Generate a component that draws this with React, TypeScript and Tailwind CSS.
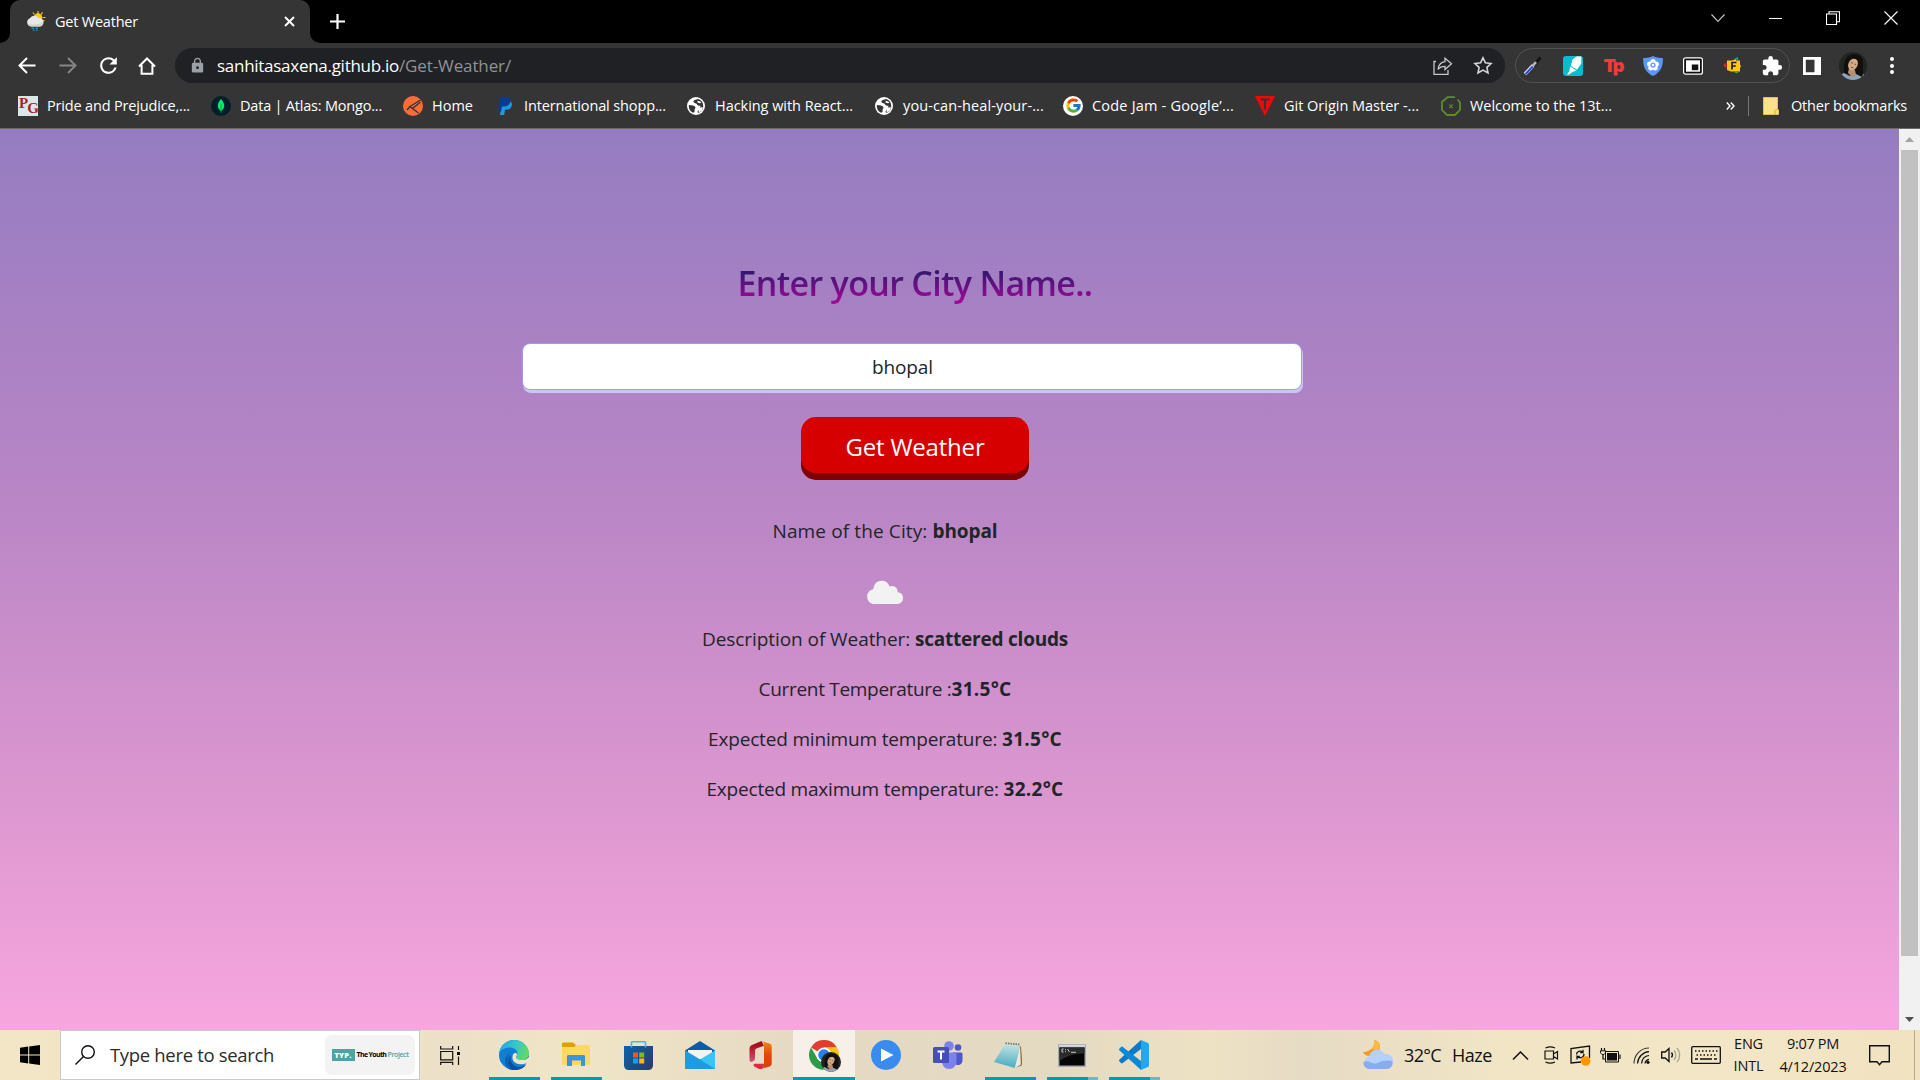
import { useLayoutEffect, useRef, type ReactNode } from "react";
import { FcGoogle } from "react-icons/fc";
import { MdExtension, MdRefresh, MdLock } from "react-icons/md";

/* One line of text, tracked so that it fills the width of its box. */
function Fit({ className, children }: { className: string; children: string }) {
  const box = useRef<HTMLSpanElement>(null);
  const line = useRef<HTMLSpanElement>(null);
  useLayoutEffect(() => {
    if (!box.current || !line.current) return;
    line.current.style.letterSpacing = "0px";
    const free = box.current.getBoundingClientRect().width - line.current.getBoundingClientRect().width;
    line.current.style.letterSpacing = `${free / children.length}px`;
  }, [children]);
  return (
    <span ref={box} className={`inline-block shrink-0 whitespace-pre ${className}`}>
      <span ref={line}>{children}</span>
    </span>
  );
}

function Svg({ className, box, children }: { className: string; box: string; children: ReactNode }) {
  return (
    <svg className={`shrink-0 ${className}`} viewBox={box} fill="none">
      {children}
    </svg>
  );
}

/* ---------- tab strip ---------- */

function WeatherFavicon() {
  return (
    <Svg className="h-5 w-5" box="0 0 20 20">
      <g stroke="#f5c400" strokeWidth="1.2">
        <path d="M12 0v3M16.5 1.2l-1.4 2.4M19.5 6.5h-3M7 1.5l1.4 2M18.5 10l-2.3-1" />
      </g>
      <circle cx="12" cy="6.5" r="4.2" fill="#f6cb15" />
      <path d="M5 15.5a4.3 4.3 0 0 1-1-8.3A5 5 0 0 1 12.500 7a4.200 4.200 0 0 1 1.500 8.500z" fill="#e8e8ea" />
      <path d="M1.500 12.500c3 1.500 9 1.500 15.500-1-.3 2.500-1.500 4-3 4H5c-1.500 0-3-1-3.500-3z" fill="#d2d2d6" />
      <path d="M5.500 17.200H8M9.500 17.200H12M7 19.300h1.500M10 19.300h1.500" stroke="#1d8ac4" strokeWidth="1.500" />
    </Svg>
  );
}

function TabStrip() {
  return (
    <div className="flex h-[43px] items-start bg-black">
      <div className="h-[43px] w-[10px] bg-[#353535]">
        <div className="h-full w-full rounded-br-[10px] bg-black" />
      </div>
      <div className="flex h-[43px] w-[300px] items-center rounded-t-[10px] bg-[#353535] pr-[15px] pb-px pl-[16px]">
        <WeatherFavicon />
        <Fit className="ml-[9px] w-[83px] text-[14.5px] leading-[41px] text-white">Get Weather</Fit>
        <Svg className="ml-auto h-[11px] w-[11px]" box="0 0 11 11">
          <path d="M1 1l9 9M10 1l-9 9" stroke="#fff" strokeWidth="1.900" />
        </Svg>
      </div>
      <div className="h-[43px] w-[10px] bg-[#353535]">
        <div className="h-full w-full rounded-bl-[10px] bg-black" />
      </div>
      <Svg className="mt-[14px] ml-[10px] h-[15px] w-[15px]" box="0 0 15 15">
        <path d="M7.500 0v15M0 7.500h15" stroke="#fff" strokeWidth="2.200" />
      </Svg>
      <div className="mt-[11px] mr-[22px] ml-auto flex h-[14px] items-center">
        <Svg className="h-[8px] w-[14px]" box="0 0 14 8">
          <path d="M.5.5L7 7.300 13.500.5" stroke="#ccc" strokeWidth="1.100" />
        </Svg>
        <div className="ml-[44px] h-px w-[13px] bg-white" />
        <Svg className="ml-[44px] h-[14px] w-[14px]" box="0 0 14 14">
          <path d="M.5 3h10v10.500H.5zM3 3V.8h10.500v10H10.700" stroke="#fff" strokeWidth="1.100" />
        </Svg>
        <Svg className="ml-[44px] h-[14px] w-[14px]" box="0 0 14 14">
          <path d="M.5.5l13 13M13.500.5l-13 13" stroke="#fff" strokeWidth="1.100" />
        </Svg>
      </div>
    </div>
  );
}

/* ---------- toolbar ---------- */

function Avatar({ className }: { className: string }) {
  return (
    <svg className={`shrink-0 overflow-hidden rounded-full ${className}`} viewBox="0 0 28 28">
      <rect width="28" height="28" fill="#20261f" />
      <path d="M3 28V22l6-3h10l7 4v5z" fill="#8ea4b8" />
      <path d="M5 21C4 10 7 2 15 2c8 0 10 6 9 12-.5 4 1 8-1 11l-8-4-4 3z" fill="#120f0f" />
      <path d="M10 16l6 2 1 5-4 2-4-4z" fill="#b98e6f" />
      <ellipse cx="14" cy="12.300" rx="4.600" ry="6.200" transform="rotate(24 14 12.300)" fill="#d3aa88" />
      <path d="M10 8.500c2-5 7-5 9-.5-3-2-6-1.500-9 .5z" fill="#120f0f" />
      <path d="M12 10.500l1.800.6M15.500 12l1.500.6M12 15l2.200.9" stroke="#5b3328" strokeWidth=".8" />
    </svg>
  );
}

function Extensions() {
  return (
    <div className="ml-[10px] flex h-[35px] w-[275px] items-center rounded-full border border-[#515151] pl-[7px]">
      <Svg className="h-5 w-5" box="0 0 20 20">
        <path d="M11 9l6.500-7.500" stroke="#151515" strokeWidth="3.200" />
        <path d="M10 9.500L13 6" stroke="#b9bcc2" strokeWidth="2.600" />
        <path d="M2 18l8-8.500" stroke="#d5dcf5" strokeWidth="3.600" />
        <path d="M2.600 18l7.200-7.700" stroke="#2849c8" strokeWidth="1.900" />
      </Svg>
      <Svg className="ml-5 h-5 w-5" box="0 0 20 20">
        <rect width="20" height="20" rx="3" fill="#07bcd0" />
        <path d="M9.500 3.500L13.500.5h4.800v7L14 13.800l-6.200-4z" fill="#fff" />
        <path d="M7.300 10.600l6 4-3.800 1.400-3.500 2.500H4l2.200-3.300z" fill="#fff" />
      </Svg>
      <div className="ml-5 flex h-5 w-5 items-center justify-center">
        <Fit className="w-[19px] font-['Inter'] text-[18px] leading-5 font-black text-[#f13c3a]">Tp</Fit>
      </div>
      <Svg className="ml-5 h-5 w-5" box="0 0 20 20">
        <path d="M10 0c3 1.500 6 2 9.800 2 .5 8-2 14-9.800 18C2.200 16-.3 10 .2 2 4 2 7 1.500 10 0z" fill="#5b97f6" />
        <g fill="#fff">
          <circle cx="10" cy="5.500" r="2.600" />
          <circle cx="13.300" cy="8" r="2.600" />
          <circle cx="12.100" cy="11.800" r="2.600" />
          <circle cx="7.900" cy="11.800" r="2.600" />
          <circle cx="6.700" cy="8" r="2.600" />
        </g>
        <circle cx="10" cy="9" r="2.600" fill="#5b97f6" />
        <circle cx="10" cy="9" r="1.300" fill="#fff" />
      </Svg>
      <Svg className="ml-5 h-5 w-5" box="0 0 20 20">
        <rect x=".6" y="1.800" width="18.800" height="16.400" rx="2" fill="#111" stroke="#fff" strokeWidth="1.200" />
        <rect x="3" y="4.300" width="14" height="11.400" fill="#fff" />
        <rect x="8.800" y="8.500" width="6.500" height="5.700" fill="#111" />
      </Svg>
      <Svg className="ml-5 h-5 w-5" box="0 0 20 20">
        <path d="M4 4.500h5l4-1.500v1.500h4v4l1 1.500-1 2v3.500H8l-4-1.500z" fill="#fbc916" />
        <path d="M0 9.500L3.500 6.500v6z" fill="#e0212c" />
        <path d="M11.500 3l3-2 1 3z" fill="#18a7b5" />
        <path d="M11 16h5l-2.500 1.500z" fill="#42a047" />
        <path d="M9 13.500V6.500h4.500M9 10h3.800" stroke="#222" strokeWidth="1.700" />
      </Svg>
      <MdExtension className="ml-[18px] h-[22px] w-[22px] text-white" />
    </div>
  );
}

function Toolbar() {
  return (
    <div className="flex h-[45px] items-center bg-[#353535] pl-[18px]">
      <Svg className="h-[17px] w-[18px]" box="0 0 18 17">
        <path d="M17.500 8.500H1.500M9 1L1.500 8.500 9 16" stroke="#fff" strokeWidth="2" />
      </Svg>
      <Svg className="ml-[23px] h-[17px] w-[18px]" box="0 0 18 17">
        <path d="M.5 8.500h16M9 1l7.500 7.500L9 16" stroke="#868686" strokeWidth="1.900" />
      </Svg>
      <MdRefresh className="ml-[19px] h-[25px] w-[25px] text-white" />
      <Svg className="ml-[17px] h-[18px] w-[18px]" box="0 0 18 18">
        <path d="M1 9.500L9 1.500l8 8M3.600 8v8.700h10.800V8" stroke="#fff" strokeWidth="2" />
      </Svg>
      <div className="ml-[19px] flex h-[35px] w-[1330px] items-center rounded-full bg-[#202124] pr-[12px] pl-[14px]">
        <MdLock className="h-[17px] w-[17px] text-[#9aa0a6]" />
        <Fit className="ml-[11px] w-[182px] text-[17px] leading-[35px] text-white">sanhitasaxena.github.io</Fit>
        <Fit className="w-[112px] text-[17px] leading-[35px] text-[#8f9397]">/Get-Weather/</Fit>
        <Svg className="ml-auto h-[18px] w-[20px]" box="0 0 20 18">
          <path d="M3 4.500H1v12.800h14V13" stroke="#c4c7c9" strokeWidth="1.300" />
          <path d="M12 1.200l6.500 5.600L12 12.500V9.300C8.500 9.300 6.500 10.200 5 12.500c.5-4.300 3-7.300 7-7.800z" stroke="#c4c7c9" strokeWidth="1.300" />
        </Svg>
        <Svg className="ml-[20px] h-[19px] w-[20px]" box="0 0 20 19">
          <path d="M10 1.800l2.400 5 5.600.7-4.100 3.800 1.100 5.600-5-2.800-5 2.800 1.100-5.600L2 7.500l5.600-.7z" stroke="#d4d6d8" strokeWidth="1.600" />
        </Svg>
      </div>
      <Extensions />
      <Svg className="ml-[13px] h-[18px] w-[18px]" box="0 0 18 18">
        <path d="M0 0h18v18H0zM2.800 2.800v12.400h8.700V2.800z" fill="#fff" fillRule="evenodd" />
      </Svg>
      <Avatar className="ml-[18px] h-7 w-7" />
      <div className="ml-[23px] flex flex-col gap-[2.500px]">
        <div className="h-1 w-1 rounded-full bg-white" />
        <div className="h-1 w-1 rounded-full bg-white" />
        <div className="h-1 w-1 rounded-full bg-white" />
      </div>
    </div>
  );
}

/* ---------- bookmarks ---------- */

function Globe() {
  return (
    <Svg className="h-5 w-5" box="0 0 20 20">
      <circle cx="10" cy="10" r="9" fill="#fff" />
      <path d="M2.800 9c2 .3 4.500.2 6.200 1.500.8 1 .5 1.800-.3 2.500l-.2 3-1.500.8C4 15.500 2.500 12.500 2.800 9z" fill="#353535" />
      <path d="M12 3c-2 .5-4.800 1-4.500 3 .3 1.500 3 .8 3.500 2.200.4 1.300 2 1.600 3.500 1.500l-1 3.300-2 2.500.5 1.500c3.500-.8 5.500-4 5.200-7.500C17 6 15 3.800 12 3z" fill="#353535" />
      <path d="M11.500 4.500c1.500.8 3 .2 3.800 2.300-1.300 1-2.300.1-3.600 0z" fill="#fff" />
      <path d="M13 12c1.500-.8 3-1 4-.5l-1.500 3.500-3 1.500z" fill="#fff" />
    </Svg>
  );
}

function Bookmark({ slot, width, icon, label }: { slot: string; width: string; icon: ReactNode; label: string }) {
  return (
    <div className={`flex shrink-0 items-center ${slot}`}>
      <div className="flex h-5 w-5 items-center justify-center">{icon}</div>
      <Fit className={`ml-[9px] text-[14.500px] leading-[20px] text-white ${width}`}>{label}</Fit>
    </div>
  );
}

function Bookmarks() {
  return (
    <div className="flex h-[41px] items-center border-b border-[#6a6a6a] bg-[#353535] pr-[13px] pb-[5px] pl-[18px]">
      <Bookmark
        slot="w-[193px]"
        width="w-[143px]"
        label="Pride and Prejudice,..."
        icon={
          <div className="flex h-5 w-5 bg-[#dbe6ea] pl-px font-['Liberation_Serif'] text-[15px] font-bold text-[#a5261c]">
            <span className="leading-[15px]">P</span>
            <span className="-ml-px leading-[24px]">G</span>
          </div>
        }
      />
      <Bookmark
        slot="w-[192px]"
        width="w-[142px]"
        label="Data | Atlas: Mongo..."
        icon={
          <Svg className="h-5 w-5" box="0 0 20 20">
            <circle cx="10" cy="10" r="10" fill="#021e2b" />
            <path d="M10 3c4.500 5 4 9.500 0 12-4-2.500-4.500-7 0-12z" fill="#00ed64" />
            <path d="M10 8v9" stroke="#05a852" strokeWidth=".8" />
          </Svg>
        }
      />
      <Bookmark
        slot="w-[92px]"
        width="w-[41px]"
        label="Home"
        icon={
          <Svg className="h-5 w-5" box="0 0 20 20">
            <circle cx="10" cy="10" r="10" fill="#ff6c37" />
            <path d="M17.500 4L7 10.500l2.500 2M17.500 6L9.500 12.500l6 4.500M7 10.500L4 14" stroke="#353535" strokeWidth="1.400" />
          </Svg>
        }
      />
      <Bookmark
        slot="w-[191px]"
        width="w-[142px]"
        label="International shopp..."
        icon={
          <Svg className="h-[18px] w-[16px]" box="0 0 16 18">
            <path d="M5 4h7c3 .5 3.500 3 2.500 5.500-.8 2.300-3 3.300-5.500 3.300H8L7.200 18H3z" fill="#1a9be0" />
            <path d="M3.500 0h6C13 0 14 2.500 13 5.500c-.8 2.700-3 4-6 4H5L4.200 14.500H.8z" fill="#0b3b8f" />
          </Svg>
        }
      />
      <Bookmark slot="w-[188px]" width="w-[138px]" label="Hacking with React..." icon={<Globe />} />
      <Bookmark slot="w-[189px]" width="w-[141px]" label="you-can-heal-your-..." icon={<Globe />} />
      <Bookmark
        slot="w-[192px]"
        width="w-[142px]"
        label="Code Jam - Google’..."
        icon={
          <div className="flex h-5 w-5 items-center justify-center rounded-full bg-white">
            <FcGoogle className="h-[17px] w-[17px]" />
          </div>
        }
      />
      <Bookmark
        slot="w-[186px]"
        width="w-[135px]"
        label="Git Origin Master -..."
        icon={
          <Svg className="h-5 w-5" box="0 0 20 20">
            <path d="M0 0h20l-10 20z" fill="#fa0505" />
            <path d="M5.500 3.500h9M10 3.500v10" stroke="#353535" strokeWidth="2.200" />
          </Svg>
        }
      />
      <Bookmark
        slot="w-[190px]"
        width="w-[142px]"
        label="Welcome to the 13t..."
        icon={
          <Svg className="h-5 w-5" box="0 0 20 20">
            <path d="M14 1.200H6.500L1 6v8L6 19h8l5-5V6.500L16.500 3.500" stroke="#5b8c2a" strokeWidth="1.800" />
            <path d="M8 8.500l4 3.500M12 8.500L8 12M10 8.500V12" stroke="#5b8c2a" strokeWidth="1" />
          </Svg>
        }
      />
      <div className="ml-auto flex items-center">
        <Svg className="h-[8px] w-[9px]" box="0 0 9 8">
          <path d="M.8.5L4 4 .8 7.500M4.800.5L8 4 4.800 7.500" stroke="#fff" strokeWidth="1.400" />
        </Svg>
        <div className="ml-[13px] h-5 w-px bg-[#777]" />
        <Svg className="ml-[14px] h-[18px] w-4" box="0 0 16 18">
          <path d="M.5.5h14v11.500l1 1v4.500H.5z" fill="#ffe08a" stroke="#e8c14a" />
          <path d="M12 17.500v-4l2.500-1.500" stroke="#d9ab2d" />
        </Svg>
        <Fit className="ml-[12px] w-[116px] text-[14.500px] leading-[20px] text-white">Other bookmarks</Fit>
      </div>
    </div>
  );
}

/* ---------- page ---------- */

function Fact({ text, textWidth, value, valueWidth }: { text: string; textWidth: string; value: string; valueWidth: string }) {
  return (
    <p className="flex h-[50px] w-full justify-center text-[19px] leading-[30px] text-[#212529]">
      <Fit className={textWidth}>{text}</Fit>
      <Fit className={`font-bold ${valueWidth}`}>{value}</Fit>
    </p>
  );
}

function WeatherPage() {
  return (
    <main className="h-full flex-1 bg-[linear-gradient(180deg,#957cc1_0%,#ba86c6_42%,#dd97d0_75%,#f8a6de_100%)] pt-[128px]">
      <div className="flex w-[1830px] flex-col items-center">
        <h1 className="flex h-[52px] bg-[linear-gradient(180deg,#1c1a66_15%,#a8089a_90%)] bg-clip-text text-[34px] leading-[52px] font-semibold text-transparent">
          <Fit className="w-[355px]">Enter your City Name..</Fit>
        </h1>
        <div className="mt-[34px] mr-[6px] flex h-[47px] w-[780px] justify-center rounded-[8px] border border-[#a29be8] bg-white pr-[19px] shadow-[1px_3px_0_#c9c6f3]">
          <Fit className="w-[61px] text-[19px] leading-[47px] text-[#212529]">bhopal</Fit>
        </div>
        <button className="mt-[27px] flex h-[56px] w-[228px] justify-center rounded-[15px] bg-[#d60000] shadow-[0_7px_0_#800000]">
          <Fit className="w-[139px] text-[24px] leading-[60px] text-white">Get Weather</Fit>
        </button>
      </div>
      <div className="mt-[43px] flex w-[1770px] flex-col items-center">
        <Fact text="Name of the City: " textWidth="w-[160px]" value="bhopal" valueWidth="w-[65px]" />
        <Svg className="mt-[13px] mb-[20px] h-[25px] w-[38px]" box="0.600 0 37 24.600">
          <path d="M7 24.500A6.500 7.300 0 0 1 7.500 10 8 8.500 0 0 1 8 8 8 8 0 0 1 23.500 7.500 5.500 5.500 0 0 1 31.500 13 5.800 5.800 0 0 1 32 24.500z" fill="#f2f2f2" />
        </Svg>
        <Fact text="Description of Weather: " textWidth="w-[213px]" value="scattered clouds" valueWidth="w-[153px]" />
        <Fact text="Current Temperature :" textWidth="w-[193px]" value="31.5°C" valueWidth="w-[60px]" />
        <Fact text="Expected minimum temperature: " textWidth="w-[294px]" value="31.5°C" valueWidth="w-[60px]" />
        <Fact text="Expected maximum temperature: " textWidth="w-[297px]" value="32.2°C" valueWidth="w-[60px]" />
      </div>
    </main>
  );
}

function Scrollbar() {
  return (
    <div className="flex w-[21px] flex-col items-center bg-[#f1f1f1]">
      <div className="flex h-[21px] items-center">
        <Svg className="h-[5px] w-[9px]" box="0 0 9 5">
          <path d="M0 5L4.500 0 9 5z" fill="#a3a3a3" />
        </Svg>
      </div>
      <div className="h-[806px] w-[17px] bg-[#c1c1c1]" />
      <div className="mt-auto flex h-[21px] items-center">
        <Svg className="h-[5px] w-[9px]" box="0 0 9 5">
          <path d="M0 0l4.500 5L9 0z" fill="#505050" />
        </Svg>
      </div>
    </div>
  );
}

/* ---------- taskbar ---------- */

function TaskApp({ children, line, active, more }: { children: ReactNode; line?: boolean; active?: boolean; more?: boolean }) {
  return (
    <div className={active ? "flex w-[62px] flex-col items-center bg-[#f6f0e9]" : "flex w-[62px] flex-col items-center"}>
      <div className="flex h-[47px] items-center pt-[3px]">{children}</div>
      {line && (
        <div className={active ? "flex h-[3px] w-full" : "ml-px flex h-[3px] w-[51px]"}>
          <div className="h-full flex-1 bg-[#0099bc]" />
          {more && <div className="h-full w-[10px] bg-[#62bcd0]" />}
        </div>
      )}
    </div>
  );
}

function EdgeIcon() {
  return (
    <Svg className="h-[30px] w-[30px]" box="0 0 30 30">
      <defs>
        <linearGradient id="edgeTop" x1="0" y1="0" x2="30" y2="14" gradientUnits="userSpaceOnUse">
          <stop stopColor="#2a9fe0" />
          <stop offset=".5" stopColor="#35c4cf" />
          <stop offset="1" stopColor="#69dc56" />
        </linearGradient>
      </defs>
      <circle cx="15" cy="15" r="15" fill="#0f7fd6" />
      <path d="M.2 13C1.500 5 8 0 15 0c9 0 15 6.500 15 13.500 0 4-3.500 6.500-7 6.500s-6-1-6-2.500 1.500-1.500 1.500-4C18.500 10 15 7.500 10.500 7.500 5.500 7.500 1.500 10 .2 13z" fill="url(#edgeTop)" />
      <path d="M12.500 12C9 14 8 18 10 22c2 4 6 6.500 11 6.500C18 30 14 30.200 11 29.500 6.500 27 5 22 6.500 18c1-3 3-5 6-6z" fill="#0a63b5" />
      <path d="M12 15c-2 5 1.500 12 8 12 3 0 5-1 7.500-2.500C24 29 19 30.500 14 30 9 27 7.500 18 12 15z" fill="#0c4f9c" />
      <path d="M17 17.500c0 1.500 2.500 2.500 6 2.500 2.500 0 5-.8 7.200-3v8l-3.200-1.800c-3 1.500-6 1.300-8 .8-4-1.200-6-4-5.500-7.500.3-2.500 1.500-3.500 3-3.500.8 0 1.500.5 1.500 1.500 0 1.500-1 1.500-1 3z" fill="#f1e5c8" />
    </Svg>
  );
}

function TaskApps() {
  return (
    <div className="flex h-full">
      <TaskApp line>
        <EdgeIcon />
      </TaskApp>
      <TaskApp line>
        <Svg className="h-[26px] w-[28px]" box="0 0 28 26">
          <path d="M0 2C0 1 .5.5 1.500.5H11l2.500 2v5H0z" fill="#dfa000" />
          <path d="M0 5h13l2-2h11.500c.8 0 1.500.6 1.500 1.500V22c0 .6-.5 1-1 1H1c-.6 0-1-.4-1-1z" fill="#ffd766" />
          <path d="M5 24V14.500c0-1 .6-1.500 1.500-1.500h15c1 0 1.500.6 1.500 1.500V24h-4v-5.500h-9V24z" fill="#3b94dc" />
        </Svg>
      </TaskApp>
      <TaskApp>
        <Svg className="h-[29px] w-[29px]" box="0 0 29 29">
          <defs>
            <linearGradient id="store" x1="0" y1="5" x2="29" y2="29" gradientUnits="userSpaceOnUse">
              <stop stopColor="#0b63ad" />
              <stop offset="1" stopColor="#2b3a66" />
            </linearGradient>
          </defs>
          <path d="M0 5h29v19.500c0 2.500-2 4.500-4.500 4.500h-20C2 29 0 27 0 24.500z" fill="url(#store)" />
          <path d="M7.500 6.500V1.500c0-.5.500-.8 1-.8h12c.5 0 1 .3 1 .8v5" stroke="#38bdf2" strokeWidth="1.600" />
          <path d="M9 11.500h5v5H9z" fill="#f35325" />
          <path d="M15.200 11.500h5v5h-5z" fill="#81bc06" />
          <path d="M9 17.500h5v5H9z" fill="#05a6f0" />
          <path d="M15.200 17.500h5v5h-5z" fill="#ffba08" />
        </Svg>
      </TaskApp>
      <TaskApp>
        <Svg className="h-[28px] w-[30px]" box="0 0 30 28">
          <path d="M0 9.500L15 0l15 9.500V20H0z" fill="#0a5ca8" />
          <path d="M3 9h24v9H3z" fill="#f3f3f5" />
          <path d="M0 9.500L15 18.500 30 9.500V28H0z" fill="#3ac3f4" />
          <path d="M0 9.500L15 18.500 30 28H0z" fill="#1d9be3" />
        </Svg>
      </TaskApp>
      <TaskApp>
        <Svg className="-ml-1 h-[28px] w-[23px]" box="0 0 23 28">
          <defs>
            <linearGradient id="officeLeft" x1="0" y1="4" x2="0" y2="24" gradientUnits="userSpaceOnUse">
              <stop stopColor="#a80f14" />
              <stop offset="1" stopColor="#d9608f" />
            </linearGradient>
            <linearGradient id="officeRight" x1="0" y1="0" x2="0" y2="28" gradientUnits="userSpaceOnUse">
              <stop stopColor="#f28a12" />
              <stop offset=".5" stopColor="#e0450c" />
              <stop offset="1" stopColor="#d8400c" />
            </linearGradient>
          </defs>
          <path d="M12.500 0L3 4C1 5 .5 6 .5 8v11c0 1.800 1.500 2.500 3 1.600 1.500-.8 2.500-1.500 2.500-3.500V10c0-1.500.5-2.200 2-2.700l7-2.500z" fill="url(#officeLeft)" />
          <path d="M12.500 0l8 2.500c1.500.5 2.200 1.500 2.200 3v17c0 1.500-.7 2.500-2.200 3l-8 2.500c1.700-1 2.500-2 2.500-4V4c0-2-.8-3-2.500-4z" fill="url(#officeRight)" />
          <path d="M15 22.800H6.500c-2 0-2.700 1.700-1 2.700l4 2.200c1.200.6 2.300.5 3.500 0 1.300-.8 2-2.200 2-4.900z" fill="#e02842" />
        </Svg>
      </TaskApp>
      <TaskApp line active>
        <div className="relative h-[30px] w-[30px]">
          <Svg className="h-[30px] w-[30px]" box="0 0 30 30">
            <path d="M15 15L2 7.500A15 15 0 0 1 28 7.500H15z" fill="#e33b2e" />
            <path d="M15 7.500h13A15 15 0 0 1 15 30l6.500-11.300z" fill="#fbc116" />
            <path d="M2 7.500l6.500 11.300L15 22l-.5 8A15 15 0 0 1 2 7.500z" fill="#2d9b48" />
            <circle cx="15" cy="15" r="7.500" fill="#fff" />
            <circle cx="15" cy="15" r="5.800" fill="#2b7de9" />
          </Svg>
          <Avatar className="absolute top-[12px] left-[12px] h-5 w-5" />
        </div>
      </TaskApp>
      <TaskApp>
        <Svg className="h-[30px] w-[30px]" box="0 0 30 30">
          <circle cx="15" cy="15" r="15" fill="#3a8bf0" />
          <path d="M10 8.500l12.500 6.500L10 21.500z" fill="#fff" />
        </Svg>
      </TaskApp>
      <TaskApp>
        <Svg className="h-[28px] w-[30px]" box="0 0 30 28">
          <circle cx="25" cy="6.500" r="3.300" fill="#4f57c9" />
          <path d="M20 11.500h8c.8 0 1.500.6 1.500 1.500v6c0 3-2 5-4.500 5s-5-2-5-5z" fill="#4f57c9" />
          <circle cx="16" cy="5" r="4.800" fill="#7b83eb" />
          <path d="M9 11.500h14.500V20c0 4.500-3 8-7.500 8-4 0-7-3-7-8z" fill="#7b83eb" />
          <rect x="0" y="6" width="16" height="16" rx="1.500" fill="#464eb8" />
          <path d="M4.500 10.500h7M8 10.500v8" stroke="#fff" strokeWidth="2" />
        </Svg>
      </TaskApp>
      <TaskApp line>
        <Svg className="-ml-1 h-[27px] w-[28px]" box="0 0 28 27">
          <defs>
            <linearGradient id="pad" x1="10" y1="2" x2="8" y2="24" gradientUnits="userSpaceOnUse">
              <stop stopColor="#c3e1e4" />
              <stop offset="1" stopColor="#4fafc0" />
            </linearGradient>
          </defs>
          <path d="M22 3l5 1.500 1.500 18.500-6 2.500z" fill="#94713f" />
          <path d="M11 2l15 1.500L21 26 0 20z" fill="url(#pad)" />
          <path d="M26 3.500l.8 19L21 26z" fill="#e3ecea" />
          <path d="M11.500 1.200l14.500 1.300" stroke="#77776f" strokeWidth="1.800" strokeDasharray="1.500 1" />
        </Svg>
      </TaskApp>
      <TaskApp line more>
        <Svg className="h-[23px] w-[28px]" box="0 0 28 23">
          <rect width="28" height="23" rx="1" fill="#a5a9b0" />
          <rect x="1" y=".8" width="26" height="2" fill="#d5d9e5" />
          <rect x="1.500" y="3.500" width="25" height="18" fill="#060606" />
          <path d="M1.500 3.500h25v6C17 9 8 12 1.500 17z" fill="#2b2b2b" />
          <path d="M5.500 5H4v3h1.500M7.500 5.200v.9M7.500 7.200v.9M9.500 5l2 3M13 8.300h5" stroke="#ddd" strokeWidth=".9" />
        </Svg>
      </TaskApp>
      <TaskApp line more>
        <Svg className="h-[30px] w-[30px]" box="0 0 30 30">
          <path d="M22 0L.5 19.500c-.6.600-.6 1.500 0 2L2 23c.6.500 1.200.5 1.800.1L22 9z" fill="#0a7bc4" />
          <path d="M22 30L.5 10.500c-.6-.6-.6-1.500 0-2L2 7c.6-.5 1.200-.5 1.800-.1L22 21z" fill="#0a8ad6" />
          <path d="M22 0l7 3c.6.300 1 1 1 1.600v20.800c0 .7-.4 1.300-1 1.600L22 30z" fill="#22a7f2" />
        </Svg>
      </TaskApp>
    </div>
  );
}

function Tray() {
  return (
    <div className="ml-auto flex h-full items-center text-[#111]">
      <Svg className="h-[30px] w-[30px]" box="0 0 30 30">
        <path d="M11.500 0c1 5-3 12-11.500 12 1.500 3 4 4 6.500 4 6 0 10.500-4.500 10.500-9 0-3.500-2-6-5.500-7z" fill="#f59a23" />
        <path d="M11.500 0c1 4-.5 7-3 9l5 2c2-1 3.500-2.500 3.500-5 0-3-2-5-5.500-6z" fill="#f7bc3b" />
        <path d="M6.500 29A6.500 6.500 0 0 1 6 16.500 8.500 8.500 0 0 1 21.500 14 7.500 7.500 0 0 1 24 29z" fill="#b4d0fb" />
        <path d="M.5 22c5-3 9 3.500 14 1s10-3 14.500-2c1.500 4-1 8-5 8H6.500C3 29 0 26 .5 22z" fill="#86aeee" />
      </Svg>
      <Fit className="ml-[11px] w-[37px] text-[18px] leading-[52px]">32°C</Fit>
      <Fit className="ml-[11px] w-[40px] text-[18px] leading-[52px]">Haze</Fit>
      <Svg className="ml-[20px] h-[9px] w-[17px]" box="0 0 17 9">
        <path d="M1 8.500l7.500-7.500L16 8.500" stroke="#111" strokeWidth="1.500" />
      </Svg>
      <Svg className="ml-[15px] h-[18px] w-[15px]" box="0 0 15 18">
        <path d="M1 5h8.500v8H1zM9.500 8L13.500 5.500v7.500l-4-2.500M1.500 2c3-1.500 6.500-1.500 9.500 0M1.500 16c3 1.500 6.500 1.500 9.500 0" stroke="#111" strokeWidth="1.200" />
      </Svg>
      <Svg className="ml-[11px] h-[21px] w-[21px]" box="0 0 21 21">
        <path d="M11 17L1 18V3.500L19.500 1v12" stroke="#111" strokeWidth="1.300" />
        <path d="M6.500 9.500c0-3 4-4.500 6.500-2V4.800M13.200 7.500h-3M14 9c0 3.500-4 5-7 2.500v3M6.800 11.500h3" stroke="#111" strokeWidth="1.300" />
        <circle cx="15.700" cy="16" r="4.800" fill="#ff9500" />
      </Svg>
      <Svg className="ml-[9px] h-[15px] w-[21px]" box="0 0 21 15">
        <path d="M5.500 3.500h13V14h-13z" stroke="#111" strokeWidth="1" />
        <path d="M7 5h10v7.500H7z" fill="#111" />
        <path d="M20 6.500v4.500M1.500 0v3M4.500 0v3M3 6v5h2.500" stroke="#111" strokeWidth="1.200" />
        <path d="M.5 2.800h5v2L4 6.500H2L.5 4.800z" fill="#f2e6c6" stroke="#111" />
      </Svg>
      <Svg className="ml-[12px] h-[17px] w-[17px]" box="0 0 17 17">
        <g stroke="#111" strokeWidth="1.200">
          <path d="M1 16.500C1 8 7.500 1 16 1" opacity=".8" />
          <path d="M4.500 16.500C5 10 10 5 16 4.700M8.500 16.500C9 12 12 9 16 8.500M12 16.500c0-2 2-4 4-4.200" />
        </g>
        <circle cx="15" cy="15.300" r="1.600" fill="#111" />
      </Svg>
      <Svg className="ml-[11px] h-[18px] w-[20px]" box="0 0 20 18">
        <path d="M.7 6h3.500L8 2.500v13L4.200 12H.7z" stroke="#111" strokeWidth="1.300" />
        <path d="M10.500 6.500c1.200 1.500 1.200 3.500 0 5" stroke="#111" strokeWidth="1.300" />
        <path d="M13 4.300c2.500 2.700 2.500 6.700 0 9.400M16 2c3.500 4 3.500 10 0 14" stroke="#aaa28e" strokeWidth="1.300" />
      </Svg>
      <Svg className="ml-[10px] h-[18px] w-[30px]" box="0 0 30 18">
        <rect x=".7" y=".7" width="28.600" height="16.600" rx="1" stroke="#111" strokeWidth="1.300" />
        <path d="M4 5h23M5.500 9h20" stroke="#111" strokeWidth="1.400" strokeDasharray="1.500 2" />
        <path d="M4 13h3M9 13h12M23 13h3" stroke="#111" strokeWidth="1.400" />
      </Svg>
      <div className="ml-[12px] flex w-[31px] flex-col items-center text-[14.500px] leading-[22px]">
        <Fit className="w-[29px]">ENG</Fit>
        <Fit className="w-[30px]">INTL</Fit>
      </div>
      <div className="ml-[15px] flex w-[68px] flex-col items-center text-[14.500px] leading-[23px]">
        <Fit className="w-[52px]">9:07 PM</Fit>
        <Fit className="w-[67px]">4/12/2023</Fit>
      </div>
      <Svg className="mr-[24px] ml-[22px] h-[21px] w-[21px]" box="0 0 21 21">
        <path d="M.7.700h19.600v16H13l-2.500 3-2.500-3H.7z" stroke="#111" strokeWidth="1.400" />
      </Svg>
      <div className="mr-[5px] h-full w-px bg-[#b8ac90]" />
    </div>
  );
}

function Taskbar() {
  return (
    <div className="flex h-[50px] bg-[linear-gradient(90deg,#f2e6c6_0%,#ece1c8_24%,#f0e5c6_30%,#e5d9c4_42%,#e4dac2_55%,#eee2c4_63%,#e6dbc4_68%,#f1e5c6_78%,#f2e6c6_92%,#f1e2c0_100%)]">
      <div className="flex w-[60px] items-center justify-center">
        <Svg className="h-5 w-5" box="0 0 20 20">
          <path d="M0 2.800l8.200-1.200v7.900H0zM9.200 1.400L20 0v9.500H9.200zM0 10.500h8.200v8L0 17.300zM9.200 10.500H20V20L9.200 18.600z" fill="#000" />
        </Svg>
      </div>
      <div className="flex w-[360px] items-center border border-[#c9c9c9] bg-white pr-[4px] pl-[14px]">
        <Svg className="h-5 w-5" box="0 0 20 20">
          <circle cx="13" cy="7" r="6.300" stroke="#111" strokeWidth="1.400" />
          <path d="M8.500 11.500L.5 19.500" stroke="#111" strokeWidth="1.400" />
        </Svg>
        <Fit className="ml-[15px] w-[164px] text-[18.500px] leading-[48px] text-[#2b2b2b]">Type here to search</Fit>
        <div className="ml-auto flex h-10 w-[90px] items-center justify-center rounded-[7px] bg-[#f3f3f3]">
          <div className="flex h-[12px] w-[23px] items-center justify-center bg-[#4fa3a3]">
            <Fit className="w-[17px] text-[7.500px] leading-[12px] font-extrabold text-white">TYP.</Fit>
          </div>
          <Fit className="ml-[2px] w-[31px] text-[7px] leading-[12px] font-bold text-black">The Youth </Fit>
          <Fit className="w-[21px] text-[7px] leading-[12px] font-semibold text-[#4fa3a3]">Project</Fit>
        </div>
      </div>
      <div className="flex w-[63px] items-center pl-[20px]">
        <Svg className="h-[19px] w-5" box="0 0 20 19">
          <path d="M.7 0v3h12V0M.7 19v-2.700h12V19M.7 5.500h12v8.300H.7zM18.500 0v4M18.500 10.500V19" stroke="#111" strokeWidth="1.200" />
          <path d="M17 6h3v3h-3z" fill="#111" />
        </Svg>
      </div>
      <TaskApps />
      <Tray />
    </div>
  );
}

export default function App() {
  return (
    <div className="flex h-[1080px] w-[1920px] flex-col overflow-hidden font-['Open_Sans','Noto_Sans',sans-serif]">
      <TabStrip />
      <Toolbar />
      <Bookmarks />
      <div className="flex h-[901px]">
        <WeatherPage />
        <Scrollbar />
      </div>
      <Taskbar />
    </div>
  );
}
